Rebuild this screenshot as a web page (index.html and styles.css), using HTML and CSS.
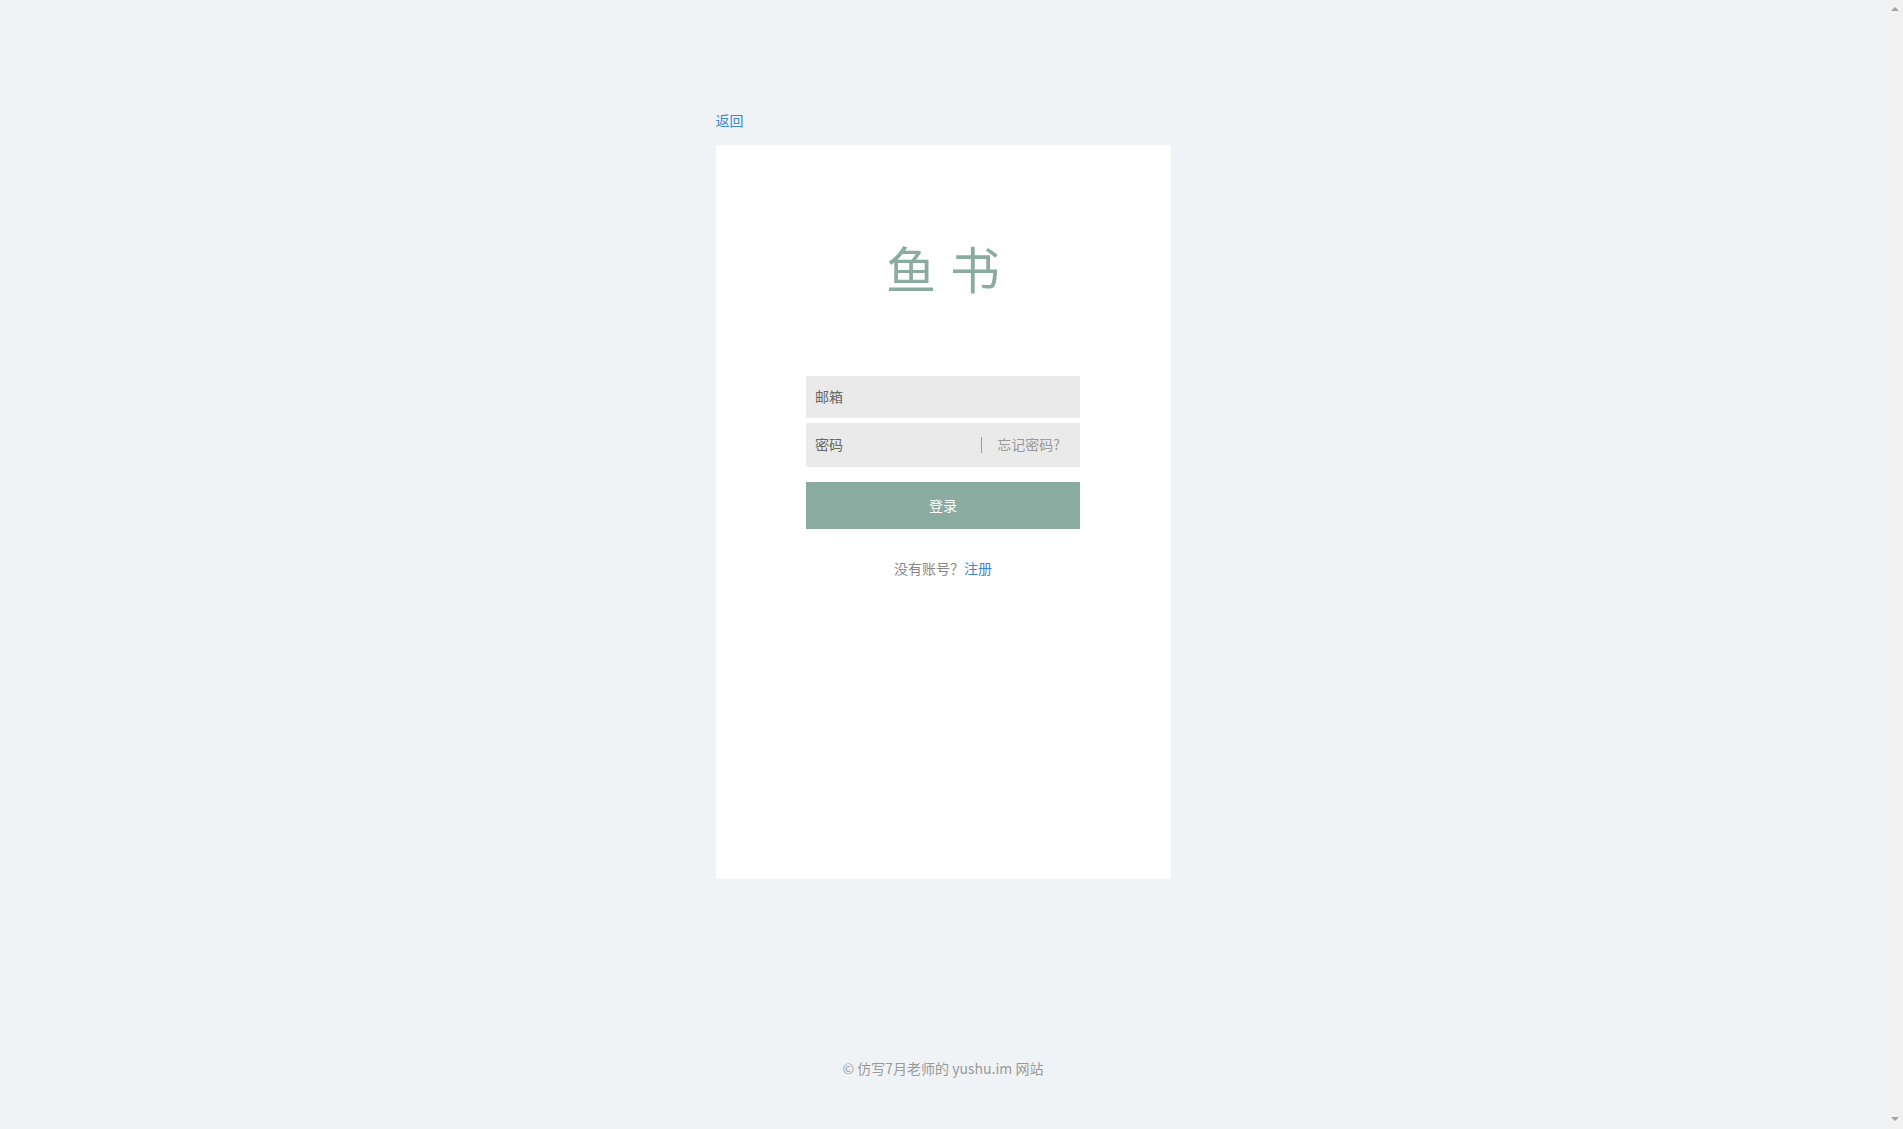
FILE: index.html
```html
<!DOCTYPE html>
<html lang="zh-CN">
<head>
<meta charset="utf-8">
<title>鱼书 - 登录</title>
<link rel="stylesheet" href="styles.css">
</head>
<body>
<div class="page">
  <div class="wrap">
    <a class="back" href="#">返回</a>
    <div class="card">
      <h1 class="title">鱼书</h1>
      <form class="form">
        <div class="field"><input class="input" type="text" placeholder="邮箱"></div>
        <div class="field field-pass">
          <input class="input" type="password" placeholder="密码">
          <span class="sep"></span>
          <a class="forgot" href="#">忘记密码?</a>
        </div>
        <button class="btn" type="button">登录</button>
        <p class="reg">没有账号？<a href="#">注册</a></p>
      </form>
    </div>
  </div>
  <footer class="footer">© 仿写7月老师的 yushu.im 网站</footer>
</div>
<div class="scrollbar" aria-hidden="true">
  <span class="arrow arrow-up"></span>
  <span class="arrow arrow-down"></span>
</div>
</body>
</html>
```

FILE: styles.css
```css
html {
  overflow: hidden;
}
body {
  margin: 0;
  background: #f0f3f6;
  font-family: "Noto Sans CJK SC", "Noto Sans", sans-serif;
  font-size: 14px;
  color: #666;
}
.page {
  padding-right: 17px;
}
.wrap {
  width: 455px;
  margin: 0 auto;
  padding-top: 110px;
}
.back {
  display: block;
  width: max-content;
  line-height: 20px;
  color: #3a87d0;
  text-decoration: none;
  font-size: 14px;
}
.card {
  margin-top: 15px;
  height: 734px;
  background: #fff;
  box-sizing: border-box;
  padding-top: 92px;
}
.title {
  margin: 0;
  text-align: center;
  font-size: 50px;
  line-height: 60px;
  font-weight: 400;
  letter-spacing: 14px;
  text-indent: 14px;
  color: #8aaba0;
}
.form {
  width: 274px;
  margin: 79px auto 0;
}
.field {
  display: flex;
  align-items: center;
  height: 42px;
  background: #eaeaea;
  margin-bottom: 5px;
}
.field-pass {
  height: 44px;
}
.input {
  flex: 1;
  min-width: 0;
  height: 100%;
  box-sizing: border-box;
  border: 0;
  outline: 0;
  background: transparent;
  padding: 0 9px 2px;
  font-family: inherit;
  font-size: 14px;
  color: #666;
}
.input::placeholder {
  color: #666;
}
.sep {
  width: 1px;
  height: 16px;
  background: #999;
}
.forgot {
  padding: 0 20px 2px 15px;
  color: #999;
  text-decoration: none;
  font-size: 14px;
}
.btn {
  display: block;
  width: 100%;
  height: 47px;
  margin-top: 15px;
  border: 0;
  padding: 0 0 2px;
  background: #8aab9f;
  color: #fff;
  font-family: inherit;
  font-size: 14px;
}
.reg {
  margin: 29px 0 0;
  text-align: center;
  color: #888;
  font-size: 14px;
  line-height: 20px;
}
.reg a {
  color: #3a87d0;
  text-decoration: none;
}
.footer {
  margin-top: 179px;
  text-align: center;
  color: #999;
  font-size: 14px;
  line-height: 20px;
}
.scrollbar {
  position: fixed;
  top: 0;
  right: 0;
  bottom: 0;
  width: 17px;
  background: #f1f1f1;
}
.arrow {
  position: absolute;
  left: 5px;
  width: 0;
  height: 0;
  border-left: 4px solid transparent;
  border-right: 4px solid transparent;
}
.arrow-up {
  top: 7px;
  border-bottom: 4px solid #a3a3a3;
}
.arrow-down {
  bottom: 8px;
  border-top: 4px solid #a3a3a3;
}
```
